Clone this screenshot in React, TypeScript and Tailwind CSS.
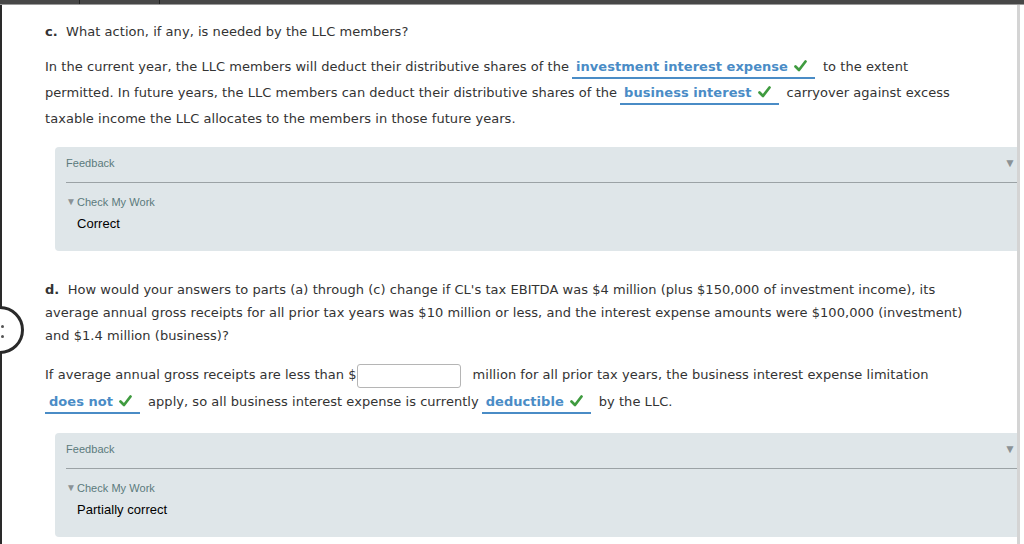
import React from 'react';

// Green check shown after a graded dropdown answer
function Check() {
  return (
    <svg width="13" height="12" viewBox="0 0 13 12" className="inline-block ml-[6px] align-[-1px]">
      <path d="M1.5 6.5 L5 10 L11.5 1.5" fill="none" stroke="#3f9b3f" strokeWidth="2.7" strokeLinecap="round" strokeLinejoin="round" />
    </svg>
  );
}

function Answer({ text, first }: { text: string; first?: boolean }) {
  return (
    <span
      className={`inline-block border-b-2 border-[#4a8cc6] pl-[4px] pr-[8px] leading-[20px] mr-[8px] ${
        first ? 'ml-0' : 'ml-[3px]'
      }`}
    >
      <span className="font-bold text-[#4a8cc6]">{text}</span>
      <Check />
    </span>
  );
}

function FeedbackBox({ result }: { result: string }) {
  return (
    <div className="ml-[10px] bg-[#dfe6e9] rounded-l-[4px] pt-[9px] pb-[19px] font-['Liberation_Sans',Arial,sans-serif]">
      <div className="ml-[11px] flex items-center justify-between border-b border-[#9ba2a5] pb-[12px] leading-[14px]">
        <span className="text-[11px] text-[#5b7a7c]">Feedback</span>
        <span className="text-[12px] leading-[12px] text-[#8b9296] mr-[1px]">▼</span>
      </div>
      <div className="ml-[11px] mt-[12px] leading-[14px] text-[11px] text-[#5b7a7c] flex items-center">
        <span className="text-[10px] leading-[10px] text-[#8b9296] mr-[1px]">▼</span>
        <span>Check My Work</span>
      </div>
      <div className="ml-[22px] mt-[6px] leading-[17px] text-[13px] text-black">{result}</div>
    </div>
  );
}

export default function App() {
  return (
    <div className="w-[1024px] h-[544px] overflow-hidden bg-white flex flex-col relative">
      {/* top toolbar strip */}
      <div className="h-[5px] bg-[#474747] border-b border-[#9a9a9a] flex shrink-0">
        <div className="w-[80px] border-r border-[#222]" />
        <div className="w-[80px] border-r border-[#222]" />
      </div>

      <div className="flex flex-1 min-h-0">
        <div className="w-[2px] bg-[#2a2a2a] shrink-0" />

        <div className="flex-1 pl-[43px] text-[13px] tracking-[0.04px] text-[#333] font-['DejaVu_Sans',Verdana,sans-serif] whitespace-nowrap">
          <p className="mt-[14px] leading-[26px]">
            <span className="font-bold">c.</span>&nbsp; What action, if any, is needed by the LLC members?
          </p>
          <p className="mt-[9px] leading-[26px]">
            In the current year, the LLC members will deduct their distributive shares of the
            <Answer text="investment interest expense" />
            to the extent
            <br />
            permitted. In future years, the LLC members can deduct their distributive shares of the
            <Answer text="business interest" />
            carryover against excess
            <br />
            taxable income the LLC allocates to the members in those future years.
          </p>

          <div className="mt-[15px]">
            <FeedbackBox result="Correct" />
          </div>

          <p className="mt-[27px] leading-[23px]">
            <span className="font-bold">d.</span>&nbsp; How would your answers to parts (a) through (c) change if CL's tax EBITDA was $4 million (plus $150,000 of investment income), its
            <br />
            average annual gross receipts for all prior tax years was $10 million or less, and the interest expense amounts were $100,000 (investment)
            <br />
            and $1.4 million (business)?
          </p>
          <p className="mt-[14px] leading-[27px]">
            If average annual gross receipts are less than $
            <input
              type="text"
              className="inline-block align-middle w-[104px] h-[24px] border border-[#b5b5b5] rounded-[3px] bg-white mr-[12px]"
            />
            million for all prior tax years, the business interest expense limitation
            <br />
            <Answer text="does not" first />
            apply, so all business interest expense is currently
            <Answer text="deductible" />
            by the LLC.
          </p>

          <div className="mt-[18px]">
            <FeedbackBox result="Partially correct" />
          </div>
        </div>

        <div className="w-[7px] shrink-0 border-l-[3px] border-[#d4d4d4] bg-white" />
      </div>

      {/* side navigation circle */}
      <div className="absolute left-[-24px] top-[306px] w-[48px] h-[48px] rounded-full border-[3px] border-[#2a2a2a] bg-white">
        <span className="absolute left-[22px] top-[16px] w-[3px] h-[3px] bg-[#555] rounded-full" />
        <span className="absolute left-[22px] top-[26px] w-[3px] h-[3px] bg-[#555] rounded-full" />
      </div>
    </div>
  );
}
